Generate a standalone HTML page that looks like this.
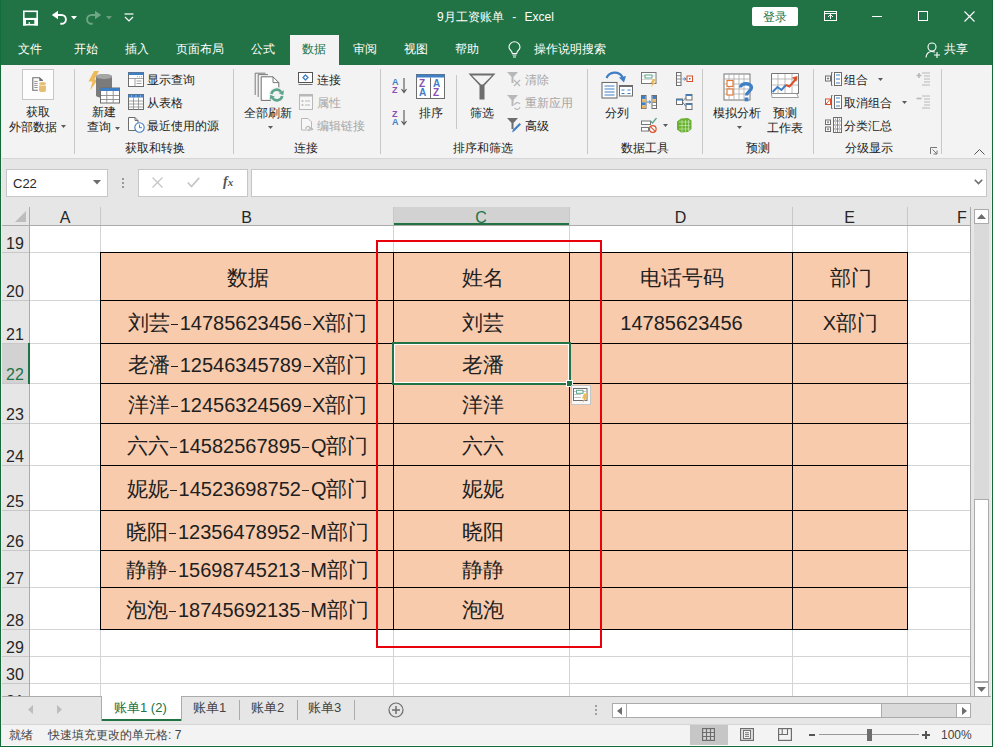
<!DOCTYPE html>
<html><head><meta charset="utf-8">
<style>
*{box-sizing:border-box}
html,body{margin:0;padding:0}
body{width:993px;height:747px;overflow:hidden;position:relative;background:#fff;font-family:"Liberation Sans",sans-serif;color:#262626}
.a{position:absolute}
.t{position:absolute;white-space:nowrap;line-height:1;font-weight:350}
svg{position:absolute;overflow:visible}
/* title */
#top{left:0;top:0;width:993px;height:65px;background:#217346}
.tab{position:absolute;top:42px;font-size:12px;color:#fff;font-weight:350;white-space:nowrap;line-height:14px}
#ribbon{left:0;top:65px;width:993px;height:94px;background:#f3f3f3;border-bottom:1px solid #d5d5d5}
.rt{position:absolute;font-size:12px;color:#222;font-weight:350;white-space:nowrap;line-height:14px}
.rg{color:#a6a6a6}
.sep{position:absolute;width:1px;background:#c8c8c8}
#fbar{left:0;top:159px;width:993px;height:48px;background:#e6e6e6}
#hdr{left:0;top:207px;width:971px;height:19px;background:#e6e6e6}
.gl{position:absolute;background:#d4d4d4}
.bl{position:absolute;background:#000}
.cell{position:absolute;font-size:20px;color:#202020;white-space:nowrap;line-height:22px;text-align:center}
.rn{position:absolute;left:1px;width:28px;text-align:center;font-size:16px;line-height:16px;color:#262626}
.ch{position:absolute;top:210px;text-align:center;font-size:16px;line-height:16px;color:#262626}
.k{font-size:21px;font-weight:350}
.hy{display:inline-block;width:10px;height:22px;position:relative;vertical-align:top}
.hy:after{content:"";position:absolute;left:1.5px;top:12px;width:7px;height:1.3px;background:#202020}
</style></head><body>

<!-- ===== title bar ===== -->
<div id="top" class="a"></div>
<!-- QAT -->
<svg style="left:23px;top:10px" width="15" height="16" viewBox="0 0 15 16"><rect x="0.8" y="1.3" width="13.4" height="13.4" fill="none" stroke="#fff" stroke-width="1.6"/><rect x="0" y="7.9" width="15" height="2.1" fill="#fff"/><rect x="0" y="10" width="3" height="5.5" fill="#fff"/><rect x="11.3" y="10" width="3.7" height="5.5" fill="#fff"/><rect x="5.7" y="12" width="1.1" height="3" fill="#fff"/></svg>
<svg style="left:51px;top:10px" width="16" height="15" viewBox="0 0 16 15"><path d="M0.8 5L7 0.8V9.2Z" fill="#fff"/><path d="M6 5H10.5A4.4 4.4 0 0 1 10.5 13.8H9.3" fill="none" stroke="#fff" stroke-width="1.9"/></svg>
<svg style="left:71px;top:16px" width="6" height="4" viewBox="0 0 6 4"><path d="M0 0H6L3 3.5Z" fill="#fff"/></svg>
<svg style="left:86px;top:10px" width="16" height="15" viewBox="0 0 16 15"><path d="M15.2 5L9 0.8V9.2Z" fill="#6fa686"/><path d="M10 5H5.5A4.4 4.4 0 0 0 5.5 13.8H6.7" fill="none" stroke="#6fa686" stroke-width="1.9"/></svg>
<svg style="left:106px;top:16px" width="6" height="4" viewBox="0 0 6 4"><path d="M0 0H6L3 3.5Z" fill="#6a9d80"/></svg>
<svg style="left:124px;top:13px" width="10" height="9" viewBox="0 0 10 9"><path d="M0.5 1H9.5" stroke="#fff" stroke-width="1.2"/><path d="M1 4L5 8L9 4" fill="none" stroke="#fff" stroke-width="1.2"/></svg>
<div class="t" style="left:437px;top:10px;font-size:12px;line-height:14px;color:#fff">9月工资账单<span style="display:inline-block;width:8.5px"></span>-<span style="display:inline-block;width:8.3px"></span>Excel</div>
<div class="a" style="left:752px;top:7px;width:46px;height:19px;background:#fff;border-radius:2px"></div>
<div class="t" style="left:763px;top:10px;font-size:12px;line-height:14px;color:#217346">登录</div>
<svg style="left:824px;top:11px" width="13" height="10" viewBox="0 0 13 10"><rect x="0.5" y="0.5" width="12" height="9" fill="none" stroke="#fff" stroke-width="1"/><path d="M0.5 2.5H12.5" stroke="#fff"/><path d="M4 6L6.5 3.5L9 6M6.5 3.5V8" fill="none" stroke="#fff"/></svg>
<div class="a" style="left:872px;top:16px;width:10px;height:1px;background:#fff"></div>
<div class="a" style="left:918px;top:11px;width:10px;height:10px;border:1px solid #fff"></div>
<svg style="left:964px;top:11px" width="11" height="11" viewBox="0 0 11 11"><path d="M0.5 0.5L10.5 10.5M10.5 0.5L0.5 10.5" stroke="#fff" stroke-width="1.1"/></svg>
<!-- tabs -->
<div class="a" style="left:290px;top:35px;width:49px;height:30px;background:#f3f3f3"></div>
<div class="tab" style="left:18px">文件</div>
<div class="tab" style="left:74px">开始</div>
<div class="tab" style="left:125px">插入</div>
<div class="tab" style="left:176px">页面布局</div>
<div class="tab" style="left:251px">公式</div>
<div class="tab" style="left:302px;color:#217346">数据</div>
<div class="tab" style="left:353px">审阅</div>
<div class="tab" style="left:404px">视图</div>
<div class="tab" style="left:455px">帮助</div>
<svg style="left:508px;top:42px" width="13" height="16" viewBox="0 0 13 16"><path d="M4.3 11.5C4.3 9 1 7.8 1 5.2A5.5 5.5 0 0 1 12 5.2C12 7.8 8.7 9 8.7 11.5Z" fill="none" stroke="#fff" stroke-width="1.1"/><path d="M4.5 13H8.5M5 15H8" stroke="#fff" stroke-width="1.1"/></svg>
<div class="tab" style="left:534px">操作说明搜索</div>
<svg style="left:925px;top:42px" width="16" height="16" viewBox="0 0 16 16"><circle cx="7" cy="5" r="4" fill="none" stroke="#fff" stroke-width="1.1"/><path d="M1 15.5C1.5 11.5 4 9.5 7 9.5C8 9.5 9 9.8 9.8 10.3" fill="none" stroke="#fff" stroke-width="1.1"/><path d="M12 10V16M9 13H15" stroke="#fff" stroke-width="1.1"/></svg>
<div class="tab" style="left:944px">共享</div>


<!-- ===== ribbon ===== -->
<div id="ribbon" class="a"></div>
<!-- group 1 -->
<div class="a" style="left:22px;top:69px;width:32px;height:31px;background:#fdfdfd;border:1px solid #c6c6c6"></div>
<svg style="left:31px;top:76px" width="17" height="18" viewBox="0 0 17 18"><path d="M6.9 14.2H1.8V1.8H8.5L11.8 4.7" fill="none" stroke="#6d6d6d" stroke-width="1.1"/><path d="M8.3 1.6L12 4.9H8.3Z" fill="#6d6d6d"/><path d="M3.2 5.4H6.7M3.2 7.4H6.7M3.2 9.4H6.7M3.2 11.5H6.7" stroke="#8a8a8a" stroke-width="0.9"/><path d="M8.1 9.6V14.8A3.4 1.3 0 0 0 14.9 14.8V9.6Z" fill="#e6bd72"/><ellipse cx="11.5" cy="7.4" rx="3.4" ry="1.5" fill="#e6bd72"/></svg>
<div class="rt" style="left:26px;top:105px">获取</div>
<div class="rt" style="left:9px;top:120px">外部数据</div>
<svg style="left:61px;top:125px" width="5" height="3" viewBox="0 0 5 3"><path d="M0 0H5L2.5 3Z" fill="#595959"/></svg>
<div class="sep" style="left:74px;top:69px;height:85px"></div>
<!-- group 2 -->
<svg style="left:87px;top:71px" width="34" height="33" viewBox="0 0 34 33"><path d="M7 0H12L7.5 8.5H11L3 19.5L5.5 10.5H1.5Z" fill="#eeb95a"/><path d="M9 5.5C9 2.5 25 2.5 25 5.5V24.5C25 27.5 9 27.5 9 24.5Z" fill="#7b7b7b"/><ellipse cx="17" cy="5.5" rx="8" ry="2.6" fill="#a5a5a5"/><rect x="13.5" y="17" width="19" height="15" fill="#fff" stroke="#6d6d6d" stroke-width="1"/><rect x="13.5" y="17" width="19" height="3" fill="#3f7fc6"/><path d="M14 24.5H32M14 28.5H32M19.8 20V32M26.2 20V32" stroke="#8a8a8a" stroke-width="0.9"/></svg>
<div class="rt" style="left:92px;top:105px">新建</div>
<div class="rt" style="left:87px;top:120px">查询</div>
<svg style="left:115px;top:127px" width="5" height="3" viewBox="0 0 5 3"><path d="M0 0H5L2.5 3Z" fill="#595959"/></svg>
<svg style="left:128px;top:72px" width="16" height="15" viewBox="0 0 16 15"><rect x="0.5" y="0.5" width="15" height="14" fill="#fff" stroke="#6d6d6d"/><rect x="0.5" y="0.5" width="15" height="2.5" fill="#3f7fc6"/><path d="M1 6.5H15M7 6.5V14.5M8.5 9H13.5M8.5 11.5H13.5M9 4.8H10M11 4.8H12M13 4.8H14" stroke="#8a8a8a" stroke-width="0.8"/></svg>
<svg style="left:128px;top:94px" width="16" height="16" viewBox="0 0 16 16"><rect x="0.5" y="0.5" width="15" height="15" fill="#fff" stroke="#6d6d6d"/><rect x="0.5" y="0.5" width="15" height="3" fill="#3f7fc6"/><path d="M1 7H15M1 10H15M1 13H15M5.5 3.5V15.5M10.5 3.5V15.5" stroke="#8a8a8a" stroke-width="0.8"/><path d="M3 2H4M7.5 2H8.5M12 2H13" stroke="#fff" stroke-width="0.8"/></svg>
<svg style="left:128px;top:117px" width="17" height="16" viewBox="0 0 17 16"><path d="M0.5 0.5H7L10 3.5V13.5H0.5Z" fill="#fff" stroke="#6d6d6d"/><path d="M7 0.5V3.5H10" fill="none" stroke="#6d6d6d"/><circle cx="11.5" cy="10.5" r="4.7" fill="#fff" stroke="#3f7fc6" stroke-width="1.1"/><path d="M11.5 7.5V10.7H14" fill="none" stroke="#3f7fc6" stroke-width="1"/></svg>
<div class="rt" style="left:147px;top:73px">显示查询</div>
<div class="rt" style="left:147px;top:96px">从表格</div>
<div class="rt" style="left:147px;top:119px">最近使用的源</div>
<div class="rt" style="left:125px;top:141px">获取和转换</div>
<div class="sep" style="left:233px;top:69px;height:85px"></div>
<!-- group 3 -->
<svg style="left:254px;top:72px" width="32" height="32" viewBox="0 0 32 32"><path d="M1.2 23V1.2H11.5" fill="none" stroke="#6d6d6d" stroke-width="0.9"/><path d="M4.2 25V2.6H14" fill="none" stroke="#6d6d6d" stroke-width="0.9"/><path d="M7.2 28.4V4.8H19L24.8 10.6V28.4Z" fill="#fff" stroke="#6d6d6d" stroke-width="1"/><path d="M19 4.8V10.6H24.8" fill="none" stroke="#6d6d6d" stroke-width="0.9"/><circle cx="22.8" cy="23" r="8" fill="#f3f3f3"/><path d="M17.4 22A5.5 5.5 0 0 1 27.2 19.9" fill="none" stroke="#5ba58a" stroke-width="2.6"/><path d="M29.3 23.3L29.9 18.3L24.7 21.3Z" fill="#5ba58a"/><path d="M28.2 24A5.5 5.5 0 0 1 18.4 26.1" fill="none" stroke="#5ba58a" stroke-width="2.6"/><path d="M16.3 22.7L15.7 27.7L20.9 24.7Z" fill="#5ba58a"/></svg>
<div class="rt" style="left:244px;top:106px">全部刷新</div>
<svg style="left:268px;top:126px" width="5" height="3" viewBox="0 0 5 3"><path d="M0 0H5L2.5 3Z" fill="#595959"/></svg>
<svg style="left:298px;top:72px" width="15" height="13" viewBox="0 0 15 13"><rect x="0.5" y="0.5" width="14" height="10" fill="#fff" stroke="#555"/><path d="M0.5 12.5H14.5" stroke="#777"/><path d="M7.5 3L10 5.5L7.5 8L5 5.5Z" fill="none" stroke="#3f7fc6" stroke-width="1.3"/></svg>
<div class="rt" style="left:317px;top:73px">连接</div>
<svg style="left:299px;top:94px" width="14" height="16" viewBox="0 0 14 16"><rect x="0.5" y="0.5" width="13" height="15" fill="#f7f7f7" stroke="#b8b8b8"/><rect x="0.5" y="0.5" width="13" height="2" fill="#b8b8b8"/><circle cx="3.5" cy="7" r="1" fill="#b8b8b8"/><circle cx="3.5" cy="11" r="1" fill="#b8b8b8"/><path d="M6 7H11M6 11H11" stroke="#b8b8b8"/></svg>
<div class="rt rg" style="left:317px;top:96px">属性</div>
<svg style="left:301px;top:118px" width="13" height="15" viewBox="0 0 13 15"><path d="M0.5 0.5H7L10.5 4V12H0.5Z" fill="#f7f7f7" stroke="#b8b8b8"/><path d="M5 11A2 2 0 0 1 9 10H10M8 13A2 2 0 0 1 12 12" fill="none" stroke="#b8b8b8" stroke-width="1.2"/></svg>
<div class="rt rg" style="left:317px;top:119px">编辑链接</div>
<div class="rt" style="left:294px;top:141px">连接</div>
<div class="sep" style="left:380px;top:69px;height:85px"></div>
<!-- group 4 -->
<div class="t" style="left:392px;top:78px;font-size:9px;line-height:8px;color:#3f7fc6;font-weight:bold">A</div>
<div class="t" style="left:392px;top:86px;font-size:9px;line-height:8px;color:#8a4fb5;font-weight:bold">Z</div>
<svg style="left:401px;top:78px" width="6" height="16" viewBox="0 0 6 16"><path d="M3 0V14M0.5 11L3 14.5L5.5 11" fill="none" stroke="#555" stroke-width="1.1"/></svg>
<div class="t" style="left:392px;top:110px;font-size:9px;line-height:8px;color:#8a4fb5;font-weight:bold">Z</div>
<div class="t" style="left:392px;top:118px;font-size:9px;line-height:8px;color:#3f7fc6;font-weight:bold">A</div>
<svg style="left:401px;top:110px" width="6" height="16" viewBox="0 0 6 16"><path d="M3 0V14M0.5 11L3 14.5L5.5 11" fill="none" stroke="#555" stroke-width="1.1"/></svg>
<svg style="left:416px;top:74px" width="29" height="25" viewBox="0 0 29 25"><rect x="0.5" y="0.5" width="28" height="24" fill="#fff" stroke="#6d6d6d"/><rect x="0.5" y="0.5" width="28" height="3" fill="#3f7fc6"/><path d="M14.5 3.5V24.5" stroke="#6d6d6d"/></svg>
<div class="t" style="left:419px;top:79px;font-size:10px;line-height:9px;color:#8a4fb5;font-weight:bold">Z</div>
<div class="t" style="left:419px;top:88px;font-size:10px;line-height:9px;color:#3f7fc6;font-weight:bold">A</div>
<div class="t" style="left:433px;top:79px;font-size:10px;line-height:9px;color:#3f7fc6;font-weight:bold">A</div>
<div class="t" style="left:433px;top:88px;font-size:10px;line-height:9px;color:#8a4fb5;font-weight:bold">Z</div>
<div class="rt" style="left:419px;top:106px">排序</div>
<div class="sep" style="left:456px;top:75px;height:54px"></div>
<svg style="left:468px;top:73px" width="28" height="27" viewBox="0 0 28 27"><path d="M0.5 0.5H27.5L16.5 12.5V26.5H11.5V12.5Z" fill="#6d6d6d"/><path d="M4 2.5H24L15 11.5H13Z" fill="#f3f3f3"/></svg>
<div class="rt" style="left:470px;top:106px">筛选</div>
<svg style="left:507px;top:72px" width="15" height="15" viewBox="0 0 15 15"><path d="M0 0H11L6.5 5V11H4.5V5Z" fill="#b8b8b8"/><path d="M7 8L13 14M13 8L7 14" stroke="#b8b8b8" stroke-width="1.3"/></svg>
<div class="rt rg" style="left:525px;top:73px">清除</div>
<svg style="left:507px;top:95px" width="15" height="15" viewBox="0 0 15 15"><path d="M0 0H11L6.5 5V11H4.5V5Z" fill="#b8b8b8"/><path d="M7.5 10A3 3 0 0 1 13 9M13 12A3 3 0 0 1 7.5 13" fill="none" stroke="#b8b8b8" stroke-width="1.2"/></svg>
<div class="rt rg" style="left:525px;top:96px">重新应用</div>
<svg style="left:507px;top:118px" width="15" height="15" viewBox="0 0 15 15"><path d="M0 0H11L6.5 5V11H4.5V5Z" fill="#6d6d6d"/><path d="M5 14.5L6 11.5L12.5 5L14 6.5L7.5 13Z" fill="#3f7fc6"/></svg>
<div class="rt" style="left:525px;top:119px">高级</div>
<div class="rt" style="left:453px;top:141px">排序和筛选</div>
<div class="sep" style="left:587px;top:69px;height:85px"></div>
<!-- group 5 -->
<svg style="left:601px;top:72px" width="33" height="28" viewBox="0 0 33 28"><rect x="1" y="10.5" width="15" height="15.5" fill="#fff" stroke="#6d6d6d" stroke-width="1.1"/><path d="M3.5 14H13.5M3.5 17H13.5M3.5 20H13.5M3.5 23H13.5" stroke="#3f7fc6" stroke-width="1"/><rect x="18.5" y="13.5" width="13" height="10.5" fill="#fff" stroke="#6d6d6d" stroke-width="1"/><rect x="18.5" y="13" width="13" height="2" fill="#6d6d6d"/><path d="M20.5 18H23.5M26.5 18H29.5M20.5 21.5H23.5M26.5 21.5H29.5" stroke="#3f7fc6" stroke-width="1"/><path d="M5.5 6A9 9 0 0 1 21.5 5" fill="none" stroke="#3f7fc6" stroke-width="2.2"/><path d="M18 5.5L25 4L23 10.5Z" fill="#3f7fc6"/></svg>
<div class="rt" style="left:605px;top:106px">分列</div>
<svg style="left:641px;top:72px" width="17" height="15" viewBox="0 0 17 15"><rect x="0.5" y="0.5" width="14.5" height="11" fill="#fff" stroke="#777"/><path d="M1 4H15M1 7.5H15" stroke="#ccc" stroke-width="0.8"/><rect x="4" y="3" width="7" height="3" fill="#fff" stroke="#5ba58a" stroke-width="1"/><path d="M12 7H15L12.5 10.5H14.5L10 15L11.5 11H9.5Z" fill="#eeb95a"/></svg>
<svg style="left:641px;top:95px" width="16" height="14" viewBox="0 0 16 14"><rect x="0.5" y="0.5" width="4.5" height="13" fill="#fff" stroke="#6d6d6d"/><rect x="1" y="1" width="3.5" height="3" fill="#3f7fc6"/><rect x="1" y="4.3" width="3.5" height="3" fill="#e6b565"/><rect x="1" y="7.3" width="3.5" height="3" fill="#3f7fc6"/><rect x="1" y="10.3" width="3.5" height="3" fill="#e6b565"/><rect x="11" y="0.5" width="4.5" height="13" fill="#fff" stroke="#6d6d6d"/><rect x="11.5" y="1" width="3.5" height="3" fill="#3f7fc6"/><rect x="11.5" y="4.3" width="3.5" height="3" fill="#e6b565"/><path d="M11.5 7.5H15M11.5 10.5H15" stroke="#6d6d6d" stroke-width="0.8"/><path d="M6 7H9.5M8 5.5L9.8 7L8 8.5" fill="none" stroke="#3f7fc6" stroke-width="1"/></svg>
<svg style="left:641px;top:117px" width="16" height="16" viewBox="0 0 16 16"><rect x="0.5" y="4" width="9" height="3.5" fill="#fff" stroke="#777"/><rect x="0.5" y="10.5" width="7" height="3.5" fill="#fff" stroke="#777"/><path d="M9.5 4L11.5 6L15.5 1" fill="none" stroke="#5ba58a" stroke-width="1.3"/><circle cx="11.8" cy="12" r="3.3" fill="#fff" stroke="#d9512b" stroke-width="1.2"/><path d="M9.6 9.8L14 14.2" stroke="#d9512b" stroke-width="1.1"/></svg>
<svg style="left:663px;top:124px" width="5" height="3" viewBox="0 0 5 3"><path d="M0 0H5L2.5 3Z" fill="#595959"/></svg>
<svg style="left:676px;top:72px" width="17" height="14" viewBox="0 0 17 14"><rect x="0.5" y="0.5" width="4.5" height="13" fill="#fff" stroke="#6d6d6d"/><path d="M1 3.7H5M1 7H5M1 10.3H5" stroke="#6d6d6d" stroke-width="0.8"/><path d="M6.5 7H10M8.5 5.5L10.3 7L8.5 8.5" fill="none" stroke="#3f7fc6" stroke-width="1"/><rect x="11" y="4" width="5.5" height="5.5" fill="#fff" stroke="#d9512b"/><rect x="13" y="6" width="1.5" height="1.5" fill="#6d6d6d"/></svg>
<svg style="left:676px;top:94px" width="17" height="16" viewBox="0 0 17 16"><rect x="0.5" y="5" width="6" height="5.5" fill="#fff" stroke="#6d6d6d"/><rect x="0.5" y="5" width="6" height="1.5" fill="#3f7fc6"/><rect x="10" y="0.5" width="6" height="5.5" fill="#fff" stroke="#6d6d6d"/><rect x="10" y="0.5" width="6" height="1.5" fill="#3f7fc6"/><rect x="10" y="9.5" width="6" height="6" fill="#fff" stroke="#6d6d6d"/><rect x="10" y="9.5" width="6" height="1.5" fill="#3f7fc6"/><path d="M6.5 7.5L10 3.5M6.5 8L10 12.5" stroke="#6d6d6d" stroke-width="0.9"/></svg>
<svg style="left:676px;top:117px" width="16" height="16" viewBox="0 0 16 16"><path d="M1 4.5L5 1.5L12 1L15.5 3.5V12L12 15L5 15.5L1 12.5Z" fill="#6bb234"/><path d="M3 5H14M3 8.5H14M3 12H14M6 3V15M9.5 3V15M12.5 3V14" stroke="#c8e6b0" stroke-width="0.7"/></svg>
<div class="rt" style="left:621px;top:141px">数据工具</div>
<div class="sep" style="left:702px;top:69px;height:85px"></div>
<!-- group 6 -->
<svg style="left:723px;top:73px" width="31" height="30" viewBox="0 0 31 30"><rect x="1" y="1" width="26" height="26" fill="#fff" stroke="#777"/><path d="M1 6H27M1 11H27M1 16H27M1 21H27M6 1V27M11 1V27M16 1V27M21 1V27" stroke="#aaa" stroke-width="0.8"/><rect x="4" y="7.5" width="6" height="6" fill="#fff" stroke="#e07b39" stroke-width="1.2"/><rect x="4" y="16" width="6" height="6" fill="#fff" stroke="#e07b39" stroke-width="1.2"/><path d="M17.5 14.5C17.5 9.5 28.5 9.5 28.5 14.5C28.5 18.5 23.5 18.5 23.5 22.5" fill="none" stroke="#3f7fc6" stroke-width="3.3"/><rect x="21.6" y="24.5" width="3.8" height="3.8" fill="#3f7fc6"/></svg>
<div class="rt" style="left:713px;top:106px">模拟分析</div>
<svg style="left:737px;top:126px" width="5" height="3" viewBox="0 0 5 3"><path d="M0 0H5L2.5 3Z" fill="#595959"/></svg>
<svg style="left:771px;top:73px" width="29" height="26" viewBox="0 0 29 26"><path d="M0.5 0.5H27.5V20.5H0.5Z" fill="#fff" stroke="#777"/><path d="M1 6H27M1 12H27M7 1V20M14 1V20M21 1V20" stroke="#aaa" stroke-width="0.8"/><path d="M1 24.5H27.5L25.5 20.5H0.5Z" fill="#fff" stroke="#888" stroke-width="0.8"/><path d="M1.5 19L6.5 14L10.5 17L15 12" fill="none" stroke="#3f7fc6" stroke-width="2"/><path d="M15 12L18.5 13.5L25 6" fill="none" stroke="#d9512b" stroke-width="2"/><path d="M21 4.5L26.5 3L25.5 8.5Z" fill="#d9512b"/></svg>
<div class="rt" style="left:773px;top:106px">预测</div>
<div class="rt" style="left:767px;top:121px">工作表</div>
<div class="rt" style="left:746px;top:141px">预测</div>
<div class="sep" style="left:813px;top:69px;height:85px"></div>
<!-- group 7 -->
<svg style="left:825px;top:72px" width="17" height="14" viewBox="0 0 17 14"><rect x="0.5" y="4" width="5" height="5" fill="#fff" stroke="#6d6d6d"/><path d="M1.8 6.5H4.2M3 5.3V7.7" stroke="#6d6d6d" stroke-width="0.8"/><path d="M7.5 0.5H6.5V13.5H7.5" fill="none" stroke="#6d6d6d"/><rect x="9.5" y="0.5" width="7" height="13" fill="#fff" stroke="#6d6d6d"/><path d="M11 3H15M11 7H15M11 11H15" stroke="#3f7fc6" stroke-width="1.1"/></svg>
<div class="rt" style="left:844px;top:73px">组合</div>
<svg style="left:878px;top:78px" width="5" height="3" viewBox="0 0 5 3"><path d="M0 0H5L2.5 3Z" fill="#595959"/></svg>
<svg style="left:825px;top:95px" width="17" height="14" viewBox="0 0 17 14"><rect x="0.5" y="4" width="5" height="5.5" fill="#fff" stroke="#d9512b"/><path d="M1 9L5 4.5" stroke="#d9512b"/><path d="M7.5 0.5H6.5V13.5H7.5" fill="none" stroke="#6d6d6d"/><rect x="9.5" y="0.5" width="7" height="13" fill="#fff" stroke="#6d6d6d"/><path d="M11 3H15M11 7H15M11 11H15" stroke="#3f7fc6" stroke-width="1.1"/></svg>
<div class="rt" style="left:844px;top:96px">取消组合</div>
<svg style="left:902px;top:101px" width="5" height="3" viewBox="0 0 5 3"><path d="M0 0H5L2.5 3Z" fill="#595959"/></svg>
<svg style="left:825px;top:117px" width="17" height="16" viewBox="0 0 17 16"><rect x="0.5" y="3" width="5" height="4.5" fill="#fff" stroke="#6d6d6d"/><rect x="0.5" y="10" width="5" height="4.5" fill="#fff" stroke="#6d6d6d"/><path d="M1.8 5.2H4.2M3 4V6.4M1.8 12.2H4.2M3 11V13.4" stroke="#6d6d6d" stroke-width="0.8"/><rect x="8.5" y="0.5" width="8" height="15" fill="#fff" stroke="#6d6d6d"/><path d="M8.5 4H16.5M8.5 8H16.5M8.5 12H16.5M12.5 0.5V15.5" stroke="#6d6d6d" stroke-width="0.8"/><path d="M10 2.2H11M14 2.2H15M10 10H11M14 10H15" stroke="#3f7fc6"/><path d="M10 6H11M14 6H15M10 14H11M14 14H15" stroke="#e07b39"/></svg>
<div class="rt" style="left:844px;top:119px">分类汇总</div>
<svg style="left:916px;top:72px" width="15" height="14" viewBox="0 0 15 14"><path d="M0.5 3.5H5.5M3 1V6" stroke="#b8b8b8" stroke-width="1.6"/><path d="M6 1H14M8 4H14M8 7H14M8 10H14M6 13H14" stroke="#b8b8b8" stroke-width="1"/></svg>
<svg style="left:916px;top:95px" width="15" height="14" viewBox="0 0 15 14"><path d="M0.5 3.5H5.5" stroke="#b8b8b8" stroke-width="1.6"/><path d="M6 1H14M8 4H14M8 7H14M8 10H14M6 13H14" stroke="#b8b8b8" stroke-width="1"/></svg>
<div class="rt" style="left:845px;top:141px">分级显示</div>
<svg style="left:930px;top:147px" width="8" height="8" viewBox="0 0 8 8"><path d="M0.5 7V0.5H7" fill="none" stroke="#777"/><path d="M2.5 2.5L7 7M7 3.5V7H3.5" fill="none" stroke="#777"/></svg>
<div class="sep" style="left:941px;top:69px;height:85px"></div>
<svg style="left:974px;top:149px" width="11" height="6" viewBox="0 0 11 6"><path d="M0.5 5.5L5.5 0.5L10.5 5.5" fill="none" stroke="#555" stroke-width="1"/></svg>


<!-- ===== formula bar ===== -->
<div id="fbar" class="a"></div>
<div class="a" style="left:6px;top:169px;width:102px;height:28px;background:#fff;border:1px solid #c6c6c6"></div>
<div class="t" style="left:13px;top:177px;font-size:13px;line-height:14px;color:#262626">C22</div>
<svg style="left:93px;top:180px" width="8" height="5" viewBox="0 0 8 5"><path d="M0 0H8L4 4.5Z" fill="#6d6d6d"/></svg>
<div class="a" style="left:122px;top:178px;width:2px;height:2px;background:#9a9a9a"></div>
<div class="a" style="left:122px;top:182px;width:2px;height:2px;background:#9a9a9a"></div>
<div class="a" style="left:122px;top:186px;width:2px;height:2px;background:#9a9a9a"></div>
<div class="a" style="left:138px;top:169px;width:110px;height:28px;background:#fff;border:1px solid #c6c6c6"></div>
<svg style="left:152px;top:177px" width="11" height="11" viewBox="0 0 11 11"><path d="M0.5 0.5L10.5 10.5M10.5 0.5L0.5 10.5" stroke="#c6c6c6" stroke-width="1.3"/></svg>
<svg style="left:187px;top:177px" width="13" height="11" viewBox="0 0 13 11"><path d="M0.8 5.5L4.5 9.5L12.2 0.8" fill="none" stroke="#c6c6c6" stroke-width="1.8"/></svg>
<div class="t" style="left:223px;top:175px;font-family:'Liberation Serif',serif;font-style:italic;font-weight:bold;font-size:14px;line-height:14px;color:#555">f<span style="font-size:11px">x</span></div>
<div class="a" style="left:251px;top:169px;width:736px;height:28px;background:#fff;border:1px solid #c6c6c6"></div>
<svg style="left:974px;top:179px" width="9" height="6" viewBox="0 0 9 6"><path d="M0.8 0.8L4.5 4.5L8.2 0.8" fill="none" stroke="#6d6d6d" stroke-width="1.6"/></svg>


<!-- ===== headers ===== -->
<div id="hdr" class="a"></div>
<div class="ch" style="left:30px;width:70px;color:#262626">A</div>
<div class="ch" style="left:100px;width:293px;color:#262626">B</div>
<div class="a" style="left:393px;top:207px;width:176px;height:18px;background:#d2d2d2"></div>
<div class="a" style="left:393px;top:223px;width:177px;height:2px;background:#217346"></div>
<div class="ch" style="left:393px;width:176px;color:#217346">C</div>
<div class="ch" style="left:569px;width:223px;color:#262626">D</div>
<div class="ch" style="left:792px;width:115px;color:#262626">E</div>
<div class="ch" style="left:955px;width:14px;color:#262626">F</div>
<svg style="left:15px;top:211px" width="11" height="11" viewBox="0 0 11 11"><path d="M11 0V11H0Z" fill="#bdbdbd"/></svg>

<!-- ===== grid ===== -->
<div class="a" style="left:30px;top:226px;width:940px;height:470px;background:#fff"></div>
<div class="a" style="left:1px;top:226px;width:28px;height:470px;background:#e6e6e6"></div>
<div class="a" style="left:971px;top:207px;width:21px;height:489px;background:#e6e6e6"></div>
<div class="gl" style="left:30px;top:252px;width:940px;height:1px"></div>
<div class="a" style="left:1px;top:252px;width:28px;height:1px;background:#c8c8c8"></div>
<div class="gl" style="left:30px;top:300px;width:940px;height:1px"></div>
<div class="a" style="left:1px;top:300px;width:28px;height:1px;background:#c8c8c8"></div>
<div class="gl" style="left:30px;top:343px;width:940px;height:1px"></div>
<div class="a" style="left:1px;top:343px;width:28px;height:1px;background:#c8c8c8"></div>
<div class="gl" style="left:30px;top:383px;width:940px;height:1px"></div>
<div class="a" style="left:1px;top:383px;width:28px;height:1px;background:#c8c8c8"></div>
<div class="gl" style="left:30px;top:423px;width:940px;height:1px"></div>
<div class="a" style="left:1px;top:423px;width:28px;height:1px;background:#c8c8c8"></div>
<div class="gl" style="left:30px;top:465px;width:940px;height:1px"></div>
<div class="a" style="left:1px;top:465px;width:28px;height:1px;background:#c8c8c8"></div>
<div class="gl" style="left:30px;top:510px;width:940px;height:1px"></div>
<div class="a" style="left:1px;top:510px;width:28px;height:1px;background:#c8c8c8"></div>
<div class="gl" style="left:30px;top:550px;width:940px;height:1px"></div>
<div class="a" style="left:1px;top:550px;width:28px;height:1px;background:#c8c8c8"></div>
<div class="gl" style="left:30px;top:587px;width:940px;height:1px"></div>
<div class="a" style="left:1px;top:587px;width:28px;height:1px;background:#c8c8c8"></div>
<div class="gl" style="left:30px;top:629px;width:940px;height:1px"></div>
<div class="a" style="left:1px;top:629px;width:28px;height:1px;background:#c8c8c8"></div>
<div class="gl" style="left:30px;top:656px;width:940px;height:1px"></div>
<div class="a" style="left:1px;top:656px;width:28px;height:1px;background:#c8c8c8"></div>
<div class="gl" style="left:30px;top:683px;width:940px;height:1px"></div>
<div class="a" style="left:1px;top:683px;width:28px;height:1px;background:#c8c8c8"></div>
<div class="gl" style="left:100px;top:226px;width:1px;height:470px"></div>
<div class="a" style="left:100px;top:207px;width:1px;height:18px;background:#c8c8c8"></div>
<div class="gl" style="left:393px;top:226px;width:1px;height:470px"></div>
<div class="a" style="left:393px;top:207px;width:1px;height:18px;background:#c8c8c8"></div>
<div class="gl" style="left:569px;top:226px;width:1px;height:470px"></div>
<div class="a" style="left:569px;top:207px;width:1px;height:18px;background:#c8c8c8"></div>
<div class="gl" style="left:792px;top:226px;width:1px;height:470px"></div>
<div class="a" style="left:792px;top:207px;width:1px;height:18px;background:#c8c8c8"></div>
<div class="gl" style="left:907px;top:226px;width:1px;height:470px"></div>
<div class="a" style="left:907px;top:207px;width:1px;height:18px;background:#c8c8c8"></div>
<div class="a" style="left:1px;top:225px;width:970px;height:1px;background:#ababab"></div>
<div class="a" style="left:29px;top:207px;width:1px;height:489px;background:#ababab"></div>
<div class="a" style="left:970px;top:207px;width:1px;height:489px;background:#ababab"></div>
<div class="a" style="left:100px;top:252px;width:807px;height:377px;background:#f8cbad"></div>
<div class="bl" style="left:100px;top:252px;width:808px;height:1px"></div>
<div class="bl" style="left:100px;top:300px;width:808px;height:1px"></div>
<div class="bl" style="left:100px;top:343px;width:808px;height:1px"></div>
<div class="bl" style="left:100px;top:383px;width:808px;height:1px"></div>
<div class="bl" style="left:100px;top:423px;width:808px;height:1px"></div>
<div class="bl" style="left:100px;top:465px;width:808px;height:1px"></div>
<div class="bl" style="left:100px;top:510px;width:808px;height:1px"></div>
<div class="bl" style="left:100px;top:550px;width:808px;height:1px"></div>
<div class="bl" style="left:100px;top:587px;width:808px;height:1px"></div>
<div class="bl" style="left:100px;top:629px;width:808px;height:1px"></div>
<div class="bl" style="left:100px;top:252px;width:1px;height:378px"></div>
<div class="bl" style="left:393px;top:252px;width:1px;height:378px"></div>
<div class="bl" style="left:569px;top:252px;width:1px;height:378px"></div>
<div class="bl" style="left:792px;top:252px;width:1px;height:378px"></div>
<div class="bl" style="left:907px;top:252px;width:1px;height:378px"></div>
<div class="cell" style="left:101px;width:293px;top:266.5px"><span class="k">数据</span></div>
<div class="cell" style="left:395px;width:176px;top:266.5px"><span class="k">姓名</span></div>
<div class="cell" style="left:570px;width:223px;top:266.5px"><span class="k">电话号码</span></div>
<div class="cell" style="left:793px;width:115px;top:266.5px"><span class="k">部门</span></div>
<div class="cell" style="left:101px;width:293px;top:312.0px"><span class="k">刘芸</span><span class="hy"></span>14785623456<span class="hy"></span>X<span class="k">部门</span></div>
<div class="cell" style="left:395px;width:176px;top:312.0px"><span class="k">刘芸</span></div>
<div class="cell" style="left:570px;width:223px;top:312.0px">14785623456</div>
<div class="cell" style="left:793px;width:115px;top:312.0px">X<span class="k">部门</span></div>
<div class="cell" style="left:101px;width:293px;top:353.5px"><span class="k">老潘</span><span class="hy"></span>12546345789<span class="hy"></span>X<span class="k">部门</span></div>
<div class="cell" style="left:395px;width:176px;top:353.5px"><span class="k">老潘</span></div>
<div class="cell" style="left:101px;width:293px;top:393.5px"><span class="k">洋洋</span><span class="hy"></span>12456324569<span class="hy"></span>X<span class="k">部门</span></div>
<div class="cell" style="left:395px;width:176px;top:393.5px"><span class="k">洋洋</span></div>
<div class="cell" style="left:101px;width:293px;top:434.5px"><span class="k">六六</span><span class="hy"></span>14582567895<span class="hy"></span>Q<span class="k">部门</span></div>
<div class="cell" style="left:395px;width:176px;top:434.5px"><span class="k">六六</span></div>
<div class="cell" style="left:101px;width:293px;top:478.0px"><span class="k">妮妮</span><span class="hy"></span>14523698752<span class="hy"></span>Q<span class="k">部门</span></div>
<div class="cell" style="left:395px;width:176px;top:478.0px"><span class="k">妮妮</span></div>
<div class="cell" style="left:101px;width:293px;top:520.5px"><span class="k">晓阳</span><span class="hy"></span>12356478952<span class="hy"></span>M<span class="k">部门</span></div>
<div class="cell" style="left:395px;width:176px;top:520.5px"><span class="k">晓阳</span></div>
<div class="cell" style="left:101px;width:293px;top:559.0px"><span class="k">静静</span><span class="hy"></span>15698745213<span class="hy"></span>M<span class="k">部门</span></div>
<div class="cell" style="left:395px;width:176px;top:559.0px"><span class="k">静静</span></div>
<div class="cell" style="left:101px;width:293px;top:598.5px"><span class="k">泡泡</span><span class="hy"></span>18745692135<span class="hy"></span>M<span class="k">部门</span></div>
<div class="cell" style="left:395px;width:176px;top:598.5px"><span class="k">泡泡</span></div>
<div class="a" style="left:1px;top:344px;width:28px;height:39px;background:#d2d2d2"></div>
<div class="a" style="left:28px;top:343px;width:2px;height:41px;background:#217346"></div>
<div class="a" style="left:392px;top:342px;width:179px;height:43px;border:2px solid #217346"></div>
<div class="a" style="left:394px;top:344px;width:175px;height:39px;border:1px solid #fff"></div>
<div class="a" style="left:566px;top:380px;width:7px;height:7px;background:#217346;border:1px solid #fff"></div>
<div class="a" style="left:571px;top:385px;width:20px;height:20px;background:#f7f7f7;border:1px solid #c6c6c6"></div>
<svg style="left:572px;top:386px" width="18" height="18" viewBox="0 0 18 18"><rect x="1.5" y="2.5" width="13.5" height="12" fill="#fff" stroke="#6d6d6d"/><path d="M2 5.5H14.5M2 8.5H9M2 11.5H9" stroke="#c0c0c0" stroke-width="0.9"/><rect x="4.5" y="4.3" width="6.5" height="3" fill="#fff" stroke="#5ba58a" stroke-width="1"/><path d="M12 7.5H16.5L13.5 11H15.8L10.5 17L12 12.5H10Z" fill="#eeb95a"/></svg>
<div class="a" style="left:376px;top:240px;width:226px;height:408px;border:2px solid #e8000b"></div>
<div class="rn" style="top:236px;color:#262626">19</div>
<div class="rn" style="top:284px;color:#262626">20</div>
<div class="rn" style="top:327px;color:#262626">21</div>
<div class="rn" style="top:367px;color:#217346">22</div>
<div class="rn" style="top:407px;color:#262626">23</div>
<div class="rn" style="top:449px;color:#262626">24</div>
<div class="rn" style="top:494px;color:#262626">25</div>
<div class="rn" style="top:534px;color:#262626">26</div>
<div class="rn" style="top:571px;color:#262626">27</div>
<div class="rn" style="top:613px;color:#262626">28</div>
<div class="rn" style="top:640px;color:#262626">29</div>
<div class="rn" style="top:667px;color:#262626">30</div>
<div class="rn" style="top:694px;color:#262626">31</div>

<!-- ===== tabs / status ===== -->
<div class="a" style="left:0;top:696px;width:993px;height:28px;background:#e6e6e6;border-top:1px solid #ababab"></div>
<svg style="left:28px;top:705px" width="5" height="9" viewBox="0 0 5 9"><path d="M5 0V9L0 4.5Z" fill="#bdbdbd"/></svg>
<svg style="left:57px;top:705px" width="5" height="9" viewBox="0 0 5 9"><path d="M0 0V9L5 4.5Z" fill="#bdbdbd"/></svg>
<div class="a" style="left:101px;top:696px;width:81px;height:25px;background:#fff;border-left:1px solid #ababab;border-right:1px solid #ababab"></div>
<div class="a" style="left:102px;top:719px;width:79px;height:2px;background:#217346"></div>
<div class="t" style="left:114px;top:701px;font-size:13px;line-height:14px;color:#217346">账单1 (2)</div>
<div class="t" style="left:193px;top:701px;font-size:13px;line-height:14px;color:#444">账单1</div>
<div class="a" style="left:239px;top:700px;width:1px;height:20px;background:#ababab"></div>
<div class="t" style="left:251px;top:701px;font-size:13px;line-height:14px;color:#444">账单2</div>
<div class="a" style="left:297px;top:700px;width:1px;height:20px;background:#ababab"></div>
<div class="t" style="left:308px;top:701px;font-size:13px;line-height:14px;color:#444">账单3</div>
<div class="a" style="left:354px;top:700px;width:1px;height:20px;background:#ababab"></div>
<svg style="left:388px;top:702px" width="16" height="16" viewBox="0 0 16 16"><circle cx="8" cy="8" r="7" fill="none" stroke="#6d6d6d" stroke-width="1.2"/><path d="M8 4V12M4 8H12" stroke="#6d6d6d" stroke-width="1.5"/></svg>
<div class="a" style="left:595px;top:705px;width:2px;height:2px;background:#a0a0a0"></div>
<div class="a" style="left:595px;top:709px;width:2px;height:2px;background:#a0a0a0"></div>
<div class="a" style="left:595px;top:713px;width:2px;height:2px;background:#a0a0a0"></div>
<div class="a" style="left:612px;top:703px;width:359px;height:15px;background:#dadada;border:1px solid #ababab"></div>
<div class="a" style="left:612px;top:703px;width:15px;height:15px;background:#fff;border:1px solid #ababab"></div>
<div class="a" style="left:626px;top:703px;width:256px;height:15px;background:#fff;border:1px solid #ababab"></div>
<div class="a" style="left:956px;top:703px;width:15px;height:15px;background:#fff;border:1px solid #ababab"></div>
<svg style="left:617px;top:707px" width="5" height="8" viewBox="0 0 5 8"><path d="M5 0V8L0 4Z" fill="#6d6d6d"/></svg>
<svg style="left:962px;top:707px" width="5" height="8" viewBox="0 0 5 8"><path d="M0 0V8L5 4Z" fill="#6d6d6d"/></svg>
<!-- v scrollbar -->
<div class="a" style="left:974px;top:224px;width:15px;height:458px;background:#dadada"></div>
<div class="a" style="left:974px;top:209px;width:15px;height:15px;background:#fff;border:1px solid #ababab"></div>
<div class="a" style="left:974px;top:499px;width:15px;height:183px;background:#fff;border:1px solid #ababab"></div>
<div class="a" style="left:974px;top:682px;width:15px;height:15px;background:#fff;border:1px solid #ababab"></div>
<svg style="left:977px;top:214px" width="9" height="5" viewBox="0 0 9 5"><path d="M0 5H9L4.5 0Z" fill="#6d6d6d"/></svg>
<svg style="left:977px;top:687px" width="9" height="5" viewBox="0 0 9 5"><path d="M0 0H9L4.5 5Z" fill="#6d6d6d"/></svg>
<div class="a" style="left:0;top:724px;width:993px;height:21px;background:#f3f3f3;border-top:1px solid #d5d5d5"></div>
<div class="t" style="left:9px;top:728px;font-size:12px;line-height:14px;color:#444">就绪</div>
<div class="t" style="left:48px;top:728px;font-size:12px;line-height:14px;color:#444">快速填充更改的单元格: 7</div>
<div class="a" style="left:690px;top:725px;width:38px;height:20px;background:#c6c6c6"></div>
<svg style="left:702px;top:728px" width="13" height="13" viewBox="0 0 13 13"><rect x="0.6" y="0.6" width="11.8" height="11.8" fill="#d6d6d6" stroke="#6d6d6d" stroke-width="1.2"/><path d="M4.5 0.5V12.5M8.5 0.5V12.5M0.5 4.5H12.5M0.5 8.5H12.5" stroke="#6d6d6d" stroke-width="1.2"/></svg>
<svg style="left:740px;top:728px" width="14" height="13" viewBox="0 0 14 13"><rect x="0.6" y="0.6" width="12.8" height="11.8" fill="none" stroke="#6d6d6d" stroke-width="1.2"/><rect x="3.4" y="2.4" width="7.2" height="8.2" fill="none" stroke="#6d6d6d" stroke-width="1.1"/><path d="M5 4.8H9M5 6.6H9M5 8.4H9" stroke="#6d6d6d" stroke-width="0.9"/></svg>
<svg style="left:778px;top:728px" width="14" height="13" viewBox="0 0 14 13"><rect x="0.6" y="0.6" width="12.8" height="11.8" fill="none" stroke="#6d6d6d" stroke-width="1.2"/><path d="M0.6 6.5H9.5V0.6M4.2 0.6V6.5" fill="none" stroke="#6d6d6d" stroke-width="1.1"/></svg>
<div class="a" style="left:809px;top:734px;width:6px;height:2px;background:#555"></div>
<div class="a" style="left:819px;top:734px;width:100px;height:1px;background:#9a9a9a"></div>
<div class="a" style="left:867px;top:729px;width:5px;height:12px;background:#6d6d6d"></div>
<div class="a" style="left:922px;top:734px;width:8px;height:2px;background:#555"></div>
<div class="a" style="left:925px;top:731px;width:2px;height:8px;background:#555"></div>
<div class="t" style="left:941px;top:728px;font-size:12px;line-height:14px;color:#444">100%</div>

<!-- window border -->
<div class="a" style="left:1px;top:65px;width:1px;height:681px;background:#f0eff0"></div>
<div class="a" style="left:991px;top:65px;width:1px;height:681px;background:#f0eff0"></div>
<div class="a" style="left:1px;top:745px;width:991px;height:1px;background:#fbfbfb"></div>
<div class="a" style="left:0;top:0;width:1px;height:747px;background:#136b3a"></div>
<div class="a" style="left:992px;top:0;width:1px;height:747px;background:#136b3a"></div>
<div class="a" style="left:0;top:746px;width:993px;height:1px;background:#136b3a"></div>
</body></html>
